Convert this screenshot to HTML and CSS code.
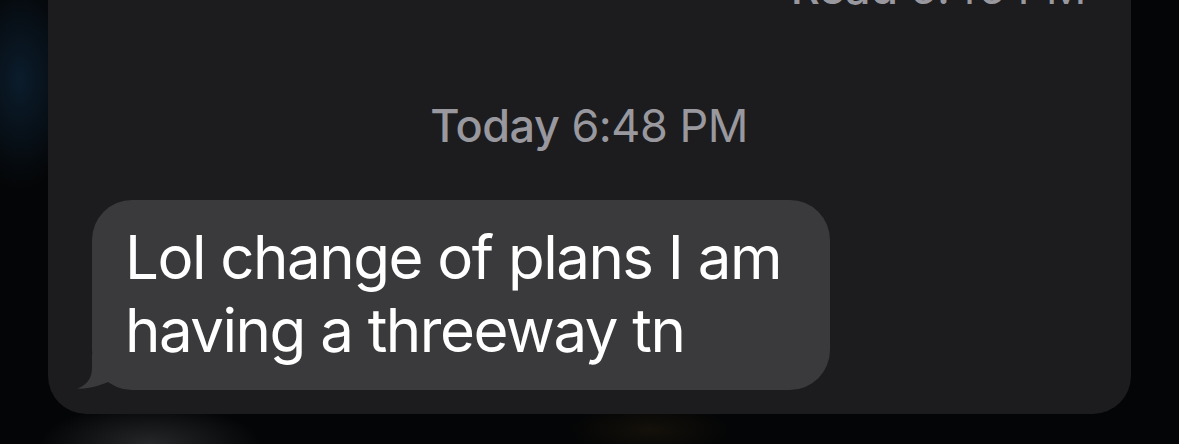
FILE: index.html
```html
<!DOCTYPE html>
<html lang="en">
<head>
  <meta charset="UTF-8">
  <meta name="viewport" content="width=device-width, initial-scale=1.0">
  <title>Messages</title>
  <link rel="stylesheet" href="styles.css">
</head>
<body>

  <div class="screen">
    <div class="thread">
      <div class="read"><b>Read</b> 6:46 PM</div>

      <div class="stamp"><b>Today</b> 6:48 PM</div>

      <div class="row">
        <div class="bubble">
          Lol change of plans I am having a threeway tn
          <svg class="tail" width="40" height="36" viewBox="0 0 40 36">
            <path d="M16 0 L16 14 C16 26 9 32 1 34.6 C12 35.4 26 31 34 27 L40 20 L40 0 Z" fill="#3a3a3d"/>
          </svg>
        </div>
      </div>
    </div>
  </div>

</body>
</html>
```

FILE: styles.css
```css
body {
  margin: 0;
  height: 444px;
  overflow: hidden;
  font-family: Inter, "Noto Sans", sans-serif;
  background-color: #040506;
  background:
    radial-gradient(ellipse 60px 110px at 20px 80px, rgba(14, 38, 60, 0.7), transparent),
    radial-gradient(ellipse 110px 40px at 150px 444px, rgba(70, 72, 76, 0.5), transparent),
    radial-gradient(ellipse 80px 26px at 650px 430px, rgba(50, 38, 18, 0.35), transparent),
    #040506;
}

.screen {
  padding: 0 48px;
}

.thread {
  margin-top: -40px;
  padding: 0 45px 24px 44px;
  background-color: #1c1c1e;
  border-radius: 0 0 38px 38px;
}

.read {
  text-align: right;
  font-size: 45px;
  line-height: 56px;
  letter-spacing: -0.5px;
  color: #98989e;
}

.read b,
.stamp b {
  font-weight: 500;
}

.stamp {
  margin-top: 82px;
  text-align: center;
  font-size: 45px;
  line-height: 56px;
  letter-spacing: -0.5px;
  color: #98989e;
}

.row {
  display: flex;
  margin-top: 46px;
}

.bubble {
  position: relative;
  box-sizing: border-box;
  width: 738px;
  padding: 21px 30px 23px 33px;
  background-color: #3a3a3d;
  border-radius: 40px;
  color: #fff;
  font-size: 60px;
  line-height: 73px;
  letter-spacing: -1.5px;
}

.tail {
  position: absolute;
  left: -16px;
  bottom: 0;
}
```
